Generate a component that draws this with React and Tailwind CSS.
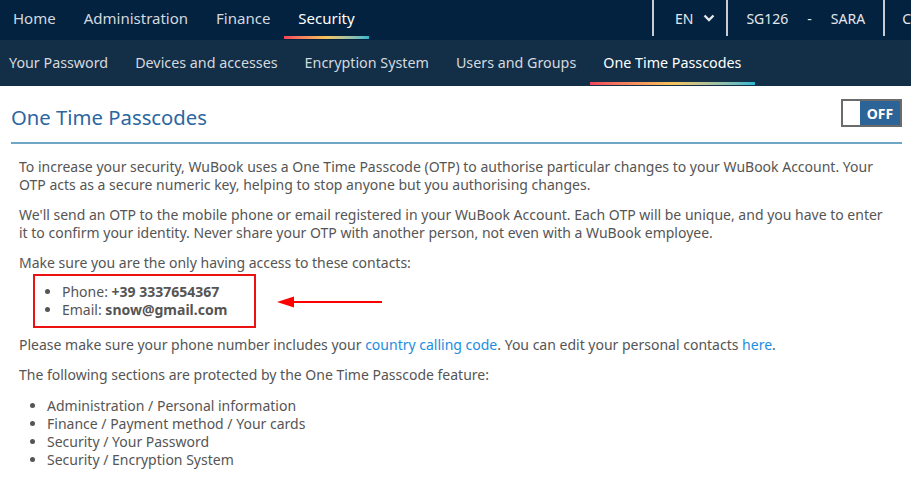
import React from 'react';

const topNav = ['Home', 'Administration', 'Finance', 'Security'];
const subNav = ['Your Password', 'Devices and accesses', 'Encryption System', 'Users and Groups', 'One Time Passcodes'];
const sections = [
  'Administration / Personal information',
  'Finance / Payment method / Your cards',
  'Security / Your Password',
  'Security / Encryption System',
];

const Rainbow = ({ className }) => (
  <div
    className={`absolute h-[3px] bg-gradient-to-r from-[#f0445a] via-[#f4c35a] to-[#22b8d0] ${className}`}
  />
);

const App = () => {
  return (
    <div className="w-[911px] h-[482px] overflow-hidden bg-white font-['Noto_Sans',sans-serif]">
      {/* top bar */}
      <div className="h-[40px] bg-[#03223f] flex items-stretch justify-between">
        <div className="flex">
          {topNav.map((item, i) => (
            <div
              key={item}
              className={`relative pb-[4px] flex items-center text-[15px] ${i === 0 ? 'pl-[13px] pr-[14px]' : 'px-[14px]'} ${item === 'Security' ? 'text-white' : 'text-[#d3d9df]'}`}
            >
              {item}
              {item === 'Security' && <Rainbow className="left-0 right-0 bottom-[1px]" />}
            </div>
          ))}
        </div>
        <div className="flex items-start text-[14px] text-[#e4e8ec]">
          <div className="h-[36px] border-l-2 border-[#c9ccd0] pl-[21px] pr-[11px] flex items-center gap-[10px]">
            <span>EN</span>
            <svg width="12" height="8" viewBox="0 0 12 8">
              <path d="M1.5 1.5 L6 6 L10.5 1.5" fill="none" stroke="#e4e8ec" strokeWidth="2.4" />
            </svg>
          </div>
          <div className="h-[36px] border-l-2 border-[#c9ccd0] pl-[18px] pr-[18px] flex items-center">
            <span>SG126</span>
            <span className="mx-[19px]">-</span>
            <span>SARA</span>
          </div>
          <div className="h-[36px] border-l-2 border-[#c9ccd0] pl-[17px] flex items-center">
            <span>C</span>
          </div>
        </div>
      </div>

      {/* sub bar */}
      <div className="h-[46px] bg-[#132f48] flex">
        {subNav.map((item, i) => (
          <div
            key={item}
            className={`relative flex items-center text-[14.3px] ${i === 0 ? 'pl-[9px] pr-[13.5px]' : 'px-[13.5px]'} ${item === 'One Time Passcodes' ? 'text-white' : 'text-[#d3d9df]'}`}
          >
            {item}
            {item === 'One Time Passcodes' && <Rainbow className="left-0 right-0 bottom-[1px]" />}
          </div>
        ))}
      </div>

      {/* content */}
      <div className="pl-[11px] pr-[9px]">
        <div className="flex items-center justify-between h-[58px] pt-[6px] border-b-2 border-[#6ea6c6]">
          <h1 className="text-[20.3px] text-[#2c67a1]">One Time Passcodes</h1>
          <div className="flex h-[28px] border-2 border-[#6b6b6b] mt-[-8px]">
            <div className="w-[17px] bg-white" />
            <div className="w-[40px] bg-[#2d6498] text-white text-[14px] font-bold flex items-center justify-center">OFF</div>
          </div>
        </div>

        <div className="px-[8px] pt-[14px] text-[14px] leading-[18px] text-[#555555]">
          <p>
            To increase your security, WuBook uses a One Time Passcode (OTP) to authorise particular changes to your WuBook Account. Your OTP acts as a secure numeric key, helping to stop anyone but you authorising changes.
          </p>
          <p className="mt-[12px]">
            We'll send an OTP to the mobile phone or email registered in your WuBook Account. Each OTP will be unique, and you have to enter it to confirm your identity. Never share your OTP with another person, not even with a WuBook employee.
          </p>
          <p className="mt-[12px]">Make sure you are the only having access to these contacts:</p>

          <div className="flex items-center mt-[2px]">
            <div className="ml-[14px] w-[223px] h-[54px] border-2 border-[#ee1111] flex flex-col justify-center pl-[12px]">
              <ul className="list-disc pl-[15px]">
                <li>Phone: <b>+39 3337654367</b></li>
                <li>Email: <b>snow@gmail.com</b></li>
              </ul>
            </div>
            <svg width="110" height="12" viewBox="0 0 110 12" className="ml-[20px] mt-[1px]">
              <path d="M16 6 H106" stroke="#f00" strokeWidth="2.2" />
              <path d="M1 6 L18 0.5 L18 11.5 Z" fill="#f00" />
            </svg>
          </div>

          <p className="mt-[8px]">
            Please make sure your phone number includes your <span className="text-[#1c8ddf]">country calling code</span>. You can edit your personal contacts <span className="text-[#1c8ddf]">here</span>.
          </p>
          <p className="mt-[12px]">The following sections are protected by the One Time Passcode feature:</p>

          <ul className="list-disc pl-[28px] mt-[13px]">
            {sections.map((s) => (
              <li key={s}>{s}</li>
            ))}
          </ul>
        </div>
      </div>
    </div>
  );
};

export default App;
